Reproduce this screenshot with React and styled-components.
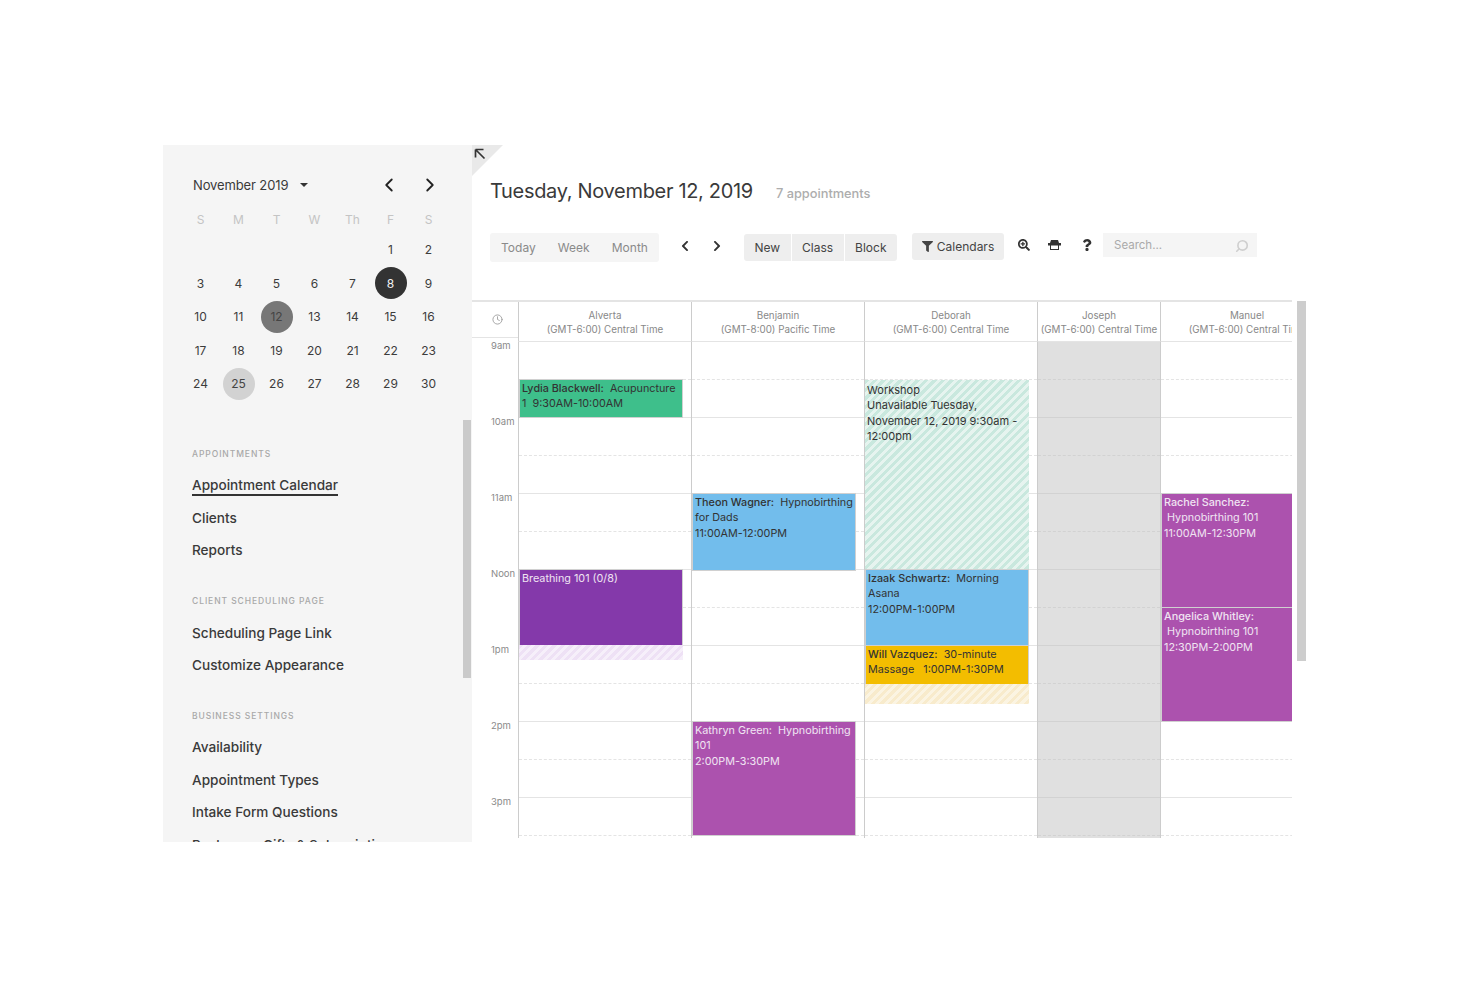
import React from 'react'
import styled, { createGlobalStyle, css } from 'styled-components'
import { ChevronLeft, ChevronRight, Clock, Search } from 'lucide-react'
import {
  FaChevronLeft,
  FaChevronRight,
  FaFilter,
  FaQuestion,
  FaSearchPlus,
} from 'react-icons/fa'

const weeks = [
  ['', '', '', '', '', '1', '2'],
  ['3', '4', '5', '6', '7', '8', '9'],
  ['10', '11', '12', '13', '14', '15', '16'],
  ['17', '18', '19', '20', '21', '22', '23'],
  ['24', '25', '26', '27', '28', '29', '30'],
]
const marks = { 8: 'selected', 12: 'today', 25: 'soft' }

const navSections = [
  { title: 'Appointments', items: ['Appointment Calendar', 'Clients', 'Reports'] },
  { title: 'Client Scheduling Page', items: ['Scheduling Page Link', 'Customize Appearance'] },
  {
    title: 'Business Settings',
    items: ['Availability', 'Appointment Types', 'Intake Form Questions', 'Packages, Gifts & Subscriptions'],
  },
]

const hours = ['9am', '10am', '11am', 'Noon', '1pm', '2pm', '3pm']

const purple = '#ac52ae'
const blue = '#72bdec'

const columns = [
  {
    name: 'Alverta',
    zone: '(GMT-6:00) Central Time',
    events: [
      { top: 38, height: 38, color: '#3ebf8b', lines: [[<b key="n">Lydia Blackwell:</b>, '  Acupuncture'], '1  9:30AM-10:00AM'] },
      { top: 228, height: 76, color: '#8439aa', light: true, lines: ['Breathing 101 (0/8)'] },
      { top: 304, height: 14, hatch: ['#eee1f5', '#f6effa'] },
    ],
  },
  {
    name: 'Benjamin',
    zone: '(GMT-8:00) Pacific Time',
    events: [
      { top: 152, height: 77, color: blue, lines: [[<b key="n">Theon Wagner:</b>, '  Hypnobirthing'], 'for Dads', '11:00AM-12:00PM'] },
      { top: 380, height: 114, color: purple, light: true, lines: ['Kathryn Green:  Hypnobirthing', '101', '2:00PM-3:30PM'] },
    ],
  },
  {
    name: 'Deborah',
    zone: '(GMT-6:00) Central Time',
    events: [
      {
        top: 39,
        height: 189,
        hatch: ['#c9e8de', '#e6f4ef'],
        lines: ['Workshop', 'Unavailable Tuesday,', 'November 12, 2019 9:30am -', '12:00pm'],
      },
      { top: 228, height: 76, color: blue, lines: [[<b key="n">Izaak Schwartz:</b>, '  Morning'], 'Asana', '12:00PM-1:00PM'] },
      { top: 304, height: 39, color: '#f3bd00', lines: [[<b key="n">Will Vazquez:</b>, '  30-minute'], 'Massage   1:00PM-1:30PM'] },
      { top: 343, height: 19, hatch: ['#f8ebcc', '#fbf4e2'] },
    ],
  },
  { name: 'Joseph', zone: '(GMT-6:00) Central Time', off: true, events: [] },
  {
    name: 'Manuel',
    zone: '(GMT-6:00) Central Time',
    events: [
      { top: 152, height: 114, color: purple, light: true, lines: [<b key="n">Rachel Sanchez:</b>, '\u00a0Hypnobirthing 101', '11:00AM-12:30PM'] },
      { top: 266, height: 114, color: purple, light: true, lines: [<b key="n">Angelica Whitley:</b>, '\u00a0Hypnobirthing 101', '12:30PM-2:00PM'] },
    ],
  },
]

const App = () => {
  return (
    <>
      <GlobalStyle />
      <Page>
        <Frame>
          <Sidebar>
            <MonthBar>
              <MonthLabel>
                November 2019 <Caret />
              </MonthLabel>
              <MonthArrows>
                <ChevronLeft size={22} strokeWidth={2} />
                <ChevronRight size={22} strokeWidth={2} />
              </MonthArrows>
            </MonthBar>
            <Month>
              {['S', 'M', 'T', 'W', 'Th', 'F', 'S'].map((d, i) => (
                <DayName key={i}>{d}</DayName>
              ))}
              {weeks.flat().map((d, i) => (
                <Day key={i} $mark={marks[d]}>
                  {d && <span>{d}</span>}
                </Day>
              ))}
            </Month>
            <Nav>
              {navSections.map((section) => (
                <NavSection key={section.title}>
                  <NavTitle>{section.title}</NavTitle>
                  {section.items.map((item) => (
                    <NavItem key={item} $active={item === 'Appointment Calendar'}>
                      <span>{item}</span>
                    </NavItem>
                  ))}
                </NavSection>
              ))}
            </Nav>
            <SideThumb />
          </Sidebar>
          <Main>
            <Corner />
            <CornerArrow viewBox="0 0 12 12">
              <path d="M1.5 1.5h8M1.5 1.5v8M1.5 1.5l9 9" />
            </CornerArrow>
            <TitleRow>
              <Title>Tuesday, November 12, 2019</Title>
              <Count>7 appointments</Count>
            </TitleRow>
            <Toolbar>
              <ViewGroup>
                <ViewButton>Today</ViewButton>
                <ViewButton>Week</ViewButton>
                <ViewButton>Month</ViewButton>
              </ViewGroup>
              <StepGroup>
                <FaChevronLeft size={12} />
                <FaChevronRight size={12} />
              </StepGroup>
              <ActionGroup>
                <ActionButton>New</ActionButton>
                <ActionButton>Class</ActionButton>
                <ActionButton>Block</ActionButton>
              </ActionGroup>
              <FilterButton>
                <FaFilter size={11} />
                Calendars
              </FilterButton>
              <IconGroup>
                <FaSearchPlus size={12} />
                <svg width="13" height="12" viewBox="0 0 13 12">
                  <path d="M3 1h7l1 3h2v2.5H0V4h2z" fill="#333" />
                  <rect x="2.5" y="6" width="8" height="4.5" fill="#fff" stroke="#333" />
                </svg>
                <FaQuestion size={12} />
              </IconGroup>
              <SearchBox>
                Search...
                <Search size={14} color="#cfcfcf" strokeWidth={2.8} />
              </SearchBox>
            </Toolbar>
            <Schedule>
              <HeadRow>
                <ClockCell>
                  <Clock size={11} color="#a0a0a0" />
                </ClockCell>
                {columns.map((col) => (
                  <HeadCell key={col.name}>
                    <HeadText>
                      {col.name}
                      <br />
                      {col.zone}
                    </HeadText>
                  </HeadCell>
                ))}
              </HeadRow>
              <Body>
                <TimeColumn>
                  {hours.map((h) => (
                    <TimeLabel key={h}>{h}</TimeLabel>
                  ))}
                </TimeColumn>
                {columns.map((col) => (
                  <Column key={col.name} $off={col.off}>
                    {Array.from({ length: 14 }).map((_, i) => (
                      <Slot key={i} $half={i % 2 === 0} $off={col.off} />
                    ))}
                    {col.events.map((ev, i) => (
                      <Event
                        key={i}
                        $top={ev.top}
                        $height={ev.height}
                        $color={ev.color}
                        $light={ev.light}
                        $hatch={ev.hatch}
                      >
                        {ev.lines &&
                          ev.lines.map((line, j) => <EventLine key={j}>{line}</EventLine>)}
                      </Event>
                    ))}
                  </Column>
                ))}
              </Body>
            </Schedule>
            <MainThumb />
          </Main>
        </Frame>
      </Page>
    </>
  )
}

export default App

const GlobalStyle = createGlobalStyle`
  body {
    margin: 0;
    background: #fff;
    font-family: Inter, "Liberation Sans", sans-serif;
    color: #333;
  }
`

const Page = styled.div`
  padding: 145px 0 0 163px;
`

const Frame = styled.div`
  display: flex;
  width: 1143px;
  height: 697px;
  overflow: hidden;
`

const Sidebar = styled.aside`
  position: relative;
  flex: 0 0 309px;
  height: 100%;
  overflow: hidden;
  background: #f5f5f5;
`

const MonthBar = styled.div`
  display: flex;
  align-items: center;
  justify-content: space-between;
  height: 22px;
  margin: 29px 0 0 30px;
  padding-right: 31px;
`

const MonthLabel = styled.div`
  font-size: 13px;
  letter-spacing: -0.12px;
  color: #3a3a3a;
`

const Caret = styled.i`
  display: inline-block;
  width: 0;
  height: 0;
  margin: 0 0 2px 8px;
  border: 4px solid transparent;
  border-top-color: #333;
  border-bottom: 0;
  vertical-align: middle;
`

const MonthArrows = styled.div`
  display: flex;
  gap: 19px;
  color: #222;
`

const Month = styled.div`
  display: grid;
  grid-template-columns: repeat(7, 38px);
  grid-template-rows: 28px repeat(5, 33.5px);
  margin: 9px 0 0 18.5px;
`

const DayName = styled.div`
  display: flex;
  align-items: center;
  justify-content: center;
  font-size: 12px;
  color: #c4c4c4;
`

const dayMarks = {
  selected: css`
    background: #333;
    color: #f2f2f2;
  `,
  today: css`
    background: #777;
    color: #444;
  `,
  soft: css`
    background: #d2d2d2;
    color: #444;
  `,
}

const Day = styled.div`
  display: flex;
  align-items: center;
  justify-content: center;
  font-size: 12px;
  color: #3c3c3c;

  span {
    display: flex;
    align-items: center;
    justify-content: center;
    width: 32px;
    height: 32px;
    border-radius: 50%;
    ${(p) => p.$mark && dayMarks[p.$mark]}
  }
`

const Nav = styled.nav`
  display: flex;
  flex-direction: column;
  gap: 26px;
  margin: 46.5px 0 0 29px;
`

const NavSection = styled.section`
  display: flex;
  flex-direction: column;
`

const NavTitle = styled.h4`
  margin: 0 0 9.5px;
  font-size: 8.5px;
  line-height: 14px;
  font-weight: 500;
  letter-spacing: 0.92px;
  text-transform: uppercase;
  color: #a8a8a8;
`

const NavItem = styled.div`
  display: flex;
  align-items: center;
  height: 32.6px;
  font-size: 13.6px;
  font-weight: 500;
  color: #3a3a3a;
  white-space: nowrap;

  span {
    padding-bottom: 1px;
    border-bottom: 2px solid ${(p) => (p.$active ? '#333' : 'transparent')};
  }
`

const SideThumb = styled.div`
  position: absolute;
  top: 275px;
  right: 1px;
  width: 8px;
  height: 258px;
  background: #cacaca;
`

const Main = styled.main`
  position: relative;
  flex: 1;
  min-width: 0;
`

const Corner = styled.div`
  position: absolute;
  top: 0;
  left: 0;
  width: 31px;
  height: 31px;
  background: #e9e9e9;
  clip-path: polygon(0 0, 100% 0, 0 100%);
`

const CornerArrow = styled.svg`
  position: absolute;
  top: 3px;
  left: 2px;
  width: 12px;
  height: 12px;
  fill: none;
  stroke: #333;
  stroke-width: 1.7;
`

const TitleRow = styled.div`
  display: flex;
  align-items: baseline;
  gap: 23px;
  padding: 32px 0 0 18px;
  height: 55px;
  box-sizing: border-box;
`

const Title = styled.h1`
  margin: 0;
  font-size: 20px;
  line-height: 28px;
  font-weight: 400;
  letter-spacing: -0.32px;
  color: #3a3a3a;
`

const Count = styled.span`
  font-size: 12.8px;
  font-weight: 500;
  color: #adadad;
`

const Toolbar = styled.div`
  display: flex;
  align-items: flex-start;
  height: 100px;
  padding: 33px 0 0 18px;
  box-sizing: border-box;
  color: #3a3a3a;
`

const ViewGroup = styled.div`
  display: flex;
  width: 169px;
  height: 29px;
  border-radius: 3px;
  background: #f5f5f5;
`

const ViewButton = styled.div`
  display: flex;
  flex: 1 1 auto;
  align-items: center;
  justify-content: center;
  font-size: 12px;
  color: #8a8a8a;
`

const StepGroup = styled.div`
  display: flex;
  gap: 20px;
  align-items: center;
  height: 25px;
  width: 85px;
  padding-left: 20px;
  box-sizing: border-box;
  color: #333;
`

const ActionGroup = styled.div`
  display: flex;
  gap: 1px;
  width: 153px;
  height: 27px;
  margin-top: 1px;
`

const ActionButton = styled.div`
  display: flex;
  flex: 1 1 auto;
  align-items: center;
  justify-content: center;
  background: #eeeeee;
  font-size: 12px;
  color: #444;

  &:first-child {
    border-radius: 3px 0 0 3px;
  }
  &:last-child {
    border-radius: 0 3px 3px 0;
  }
`

const FilterButton = styled.div`
  display: flex;
  align-items: center;
  justify-content: center;
  gap: 4px;
  width: 92px;
  height: 27px;
  margin-left: 15px;
  border-radius: 3px;
  background: #eeeeee;
  font-size: 12px;
  color: #444;
`

const IconGroup = styled.div`
  display: flex;
  align-items: center;
  gap: 18px;
  height: 24px;
  width: 99px;
  padding-left: 14px;
  box-sizing: border-box;
  color: #333;

  svg:last-child {
    margin-left: 2px;
  }
`

const SearchBox = styled.div`
  display: flex;
  align-items: center;
  justify-content: space-between;
  width: 154px;
  height: 24px;
  padding: 0 8px 0 11px;
  box-sizing: border-box;
  background: #f5f5f5;
  font-size: 11.5px;
  color: #aaa;

  svg {
    transform: scaleX(-1);
    margin-top: 2px;
  }
`

const Schedule = styled.div`
  width: 820px;
  height: 538px;
  overflow: hidden;
  border-top: 2px solid #e4e4e4;
  box-sizing: border-box;
`

const gridColumns = '46px 173px 173px 173px 123px 173px'

const HeadRow = styled.div`
  display: grid;
  grid-template-columns: ${gridColumns};
  height: 40px;
`

const ClockCell = styled.div`
  display: flex;
  align-items: center;
  justify-content: center;
  height: 36px;
  border-bottom: 1px solid #e4e4e4;
  padding-left: 4px;
  box-sizing: border-box;
`

const HeadCell = styled.div`
  border-left: 1px solid #ccc;
  border-bottom: 1px solid #e4e4e4;
  box-sizing: border-box;
  text-align: center;
`

const HeadText = styled.div`
  padding-top: 7px;
  font-size: 9.8px;
  line-height: 14px;
  color: #888;
  white-space: nowrap;
`

const Body = styled.div`
  display: grid;
  grid-template-columns: ${gridColumns};
`

const TimeColumn = styled.div`
  display: flex;
  flex-direction: column;
  margin-top: -4px;
  padding-left: 19px;
`

const TimeLabel = styled.div`
  height: 76px;
  font-size: 9.5px;
  line-height: 15px;
  color: #8a8a8a;
`

const Column = styled.div`
  position: relative;
  box-sizing: border-box;
  border-left: 1px solid #ccc;
  background: ${(p) => (p.$off ? '#e0e0e0' : '#fff')};
`

const Slot = styled.div`
  height: 38px;
  box-sizing: border-box;
  border-bottom: 1px ${(p) => (p.$half ? 'dashed' : 'solid')}
    ${(p) => (p.$off ? '#d2d2d2' : '#e4e4e4')};
`

const Event = styled.div`
  position: absolute;
  top: ${(p) => p.$top - 1}px;
  left: 0;
  width: 164px;
  height: ${(p) => p.$height + 1}px;
  padding: 1px 2px;
  box-sizing: border-box;
  overflow: hidden;
  font-size: 10.8px;
  color: ${(p) => (p.$light ? '#f0e4f2' : '#333')};
  ${(p) =>
    p.$hatch
      ? css`
          padding: 3px 2px 0;
          font-size: 11px;
          background: repeating-linear-gradient(
            135deg,
            ${p.$hatch[0]} 0 3px,
            ${p.$hatch[1]} 3px 6px
          );
        `
      : css`
          background: ${p.$color};
          border: 1px solid #d0d0d0;
        `}
`

const EventLine = styled.div`
  line-height: 15.3px;
  white-space: pre;

  b {
    font-weight: 500;
  }
`

const MainThumb = styled.div`
  position: absolute;
  top: 156px;
  left: 825px;
  width: 9px;
  height: 360px;
  background: #cdcdcd;
`
